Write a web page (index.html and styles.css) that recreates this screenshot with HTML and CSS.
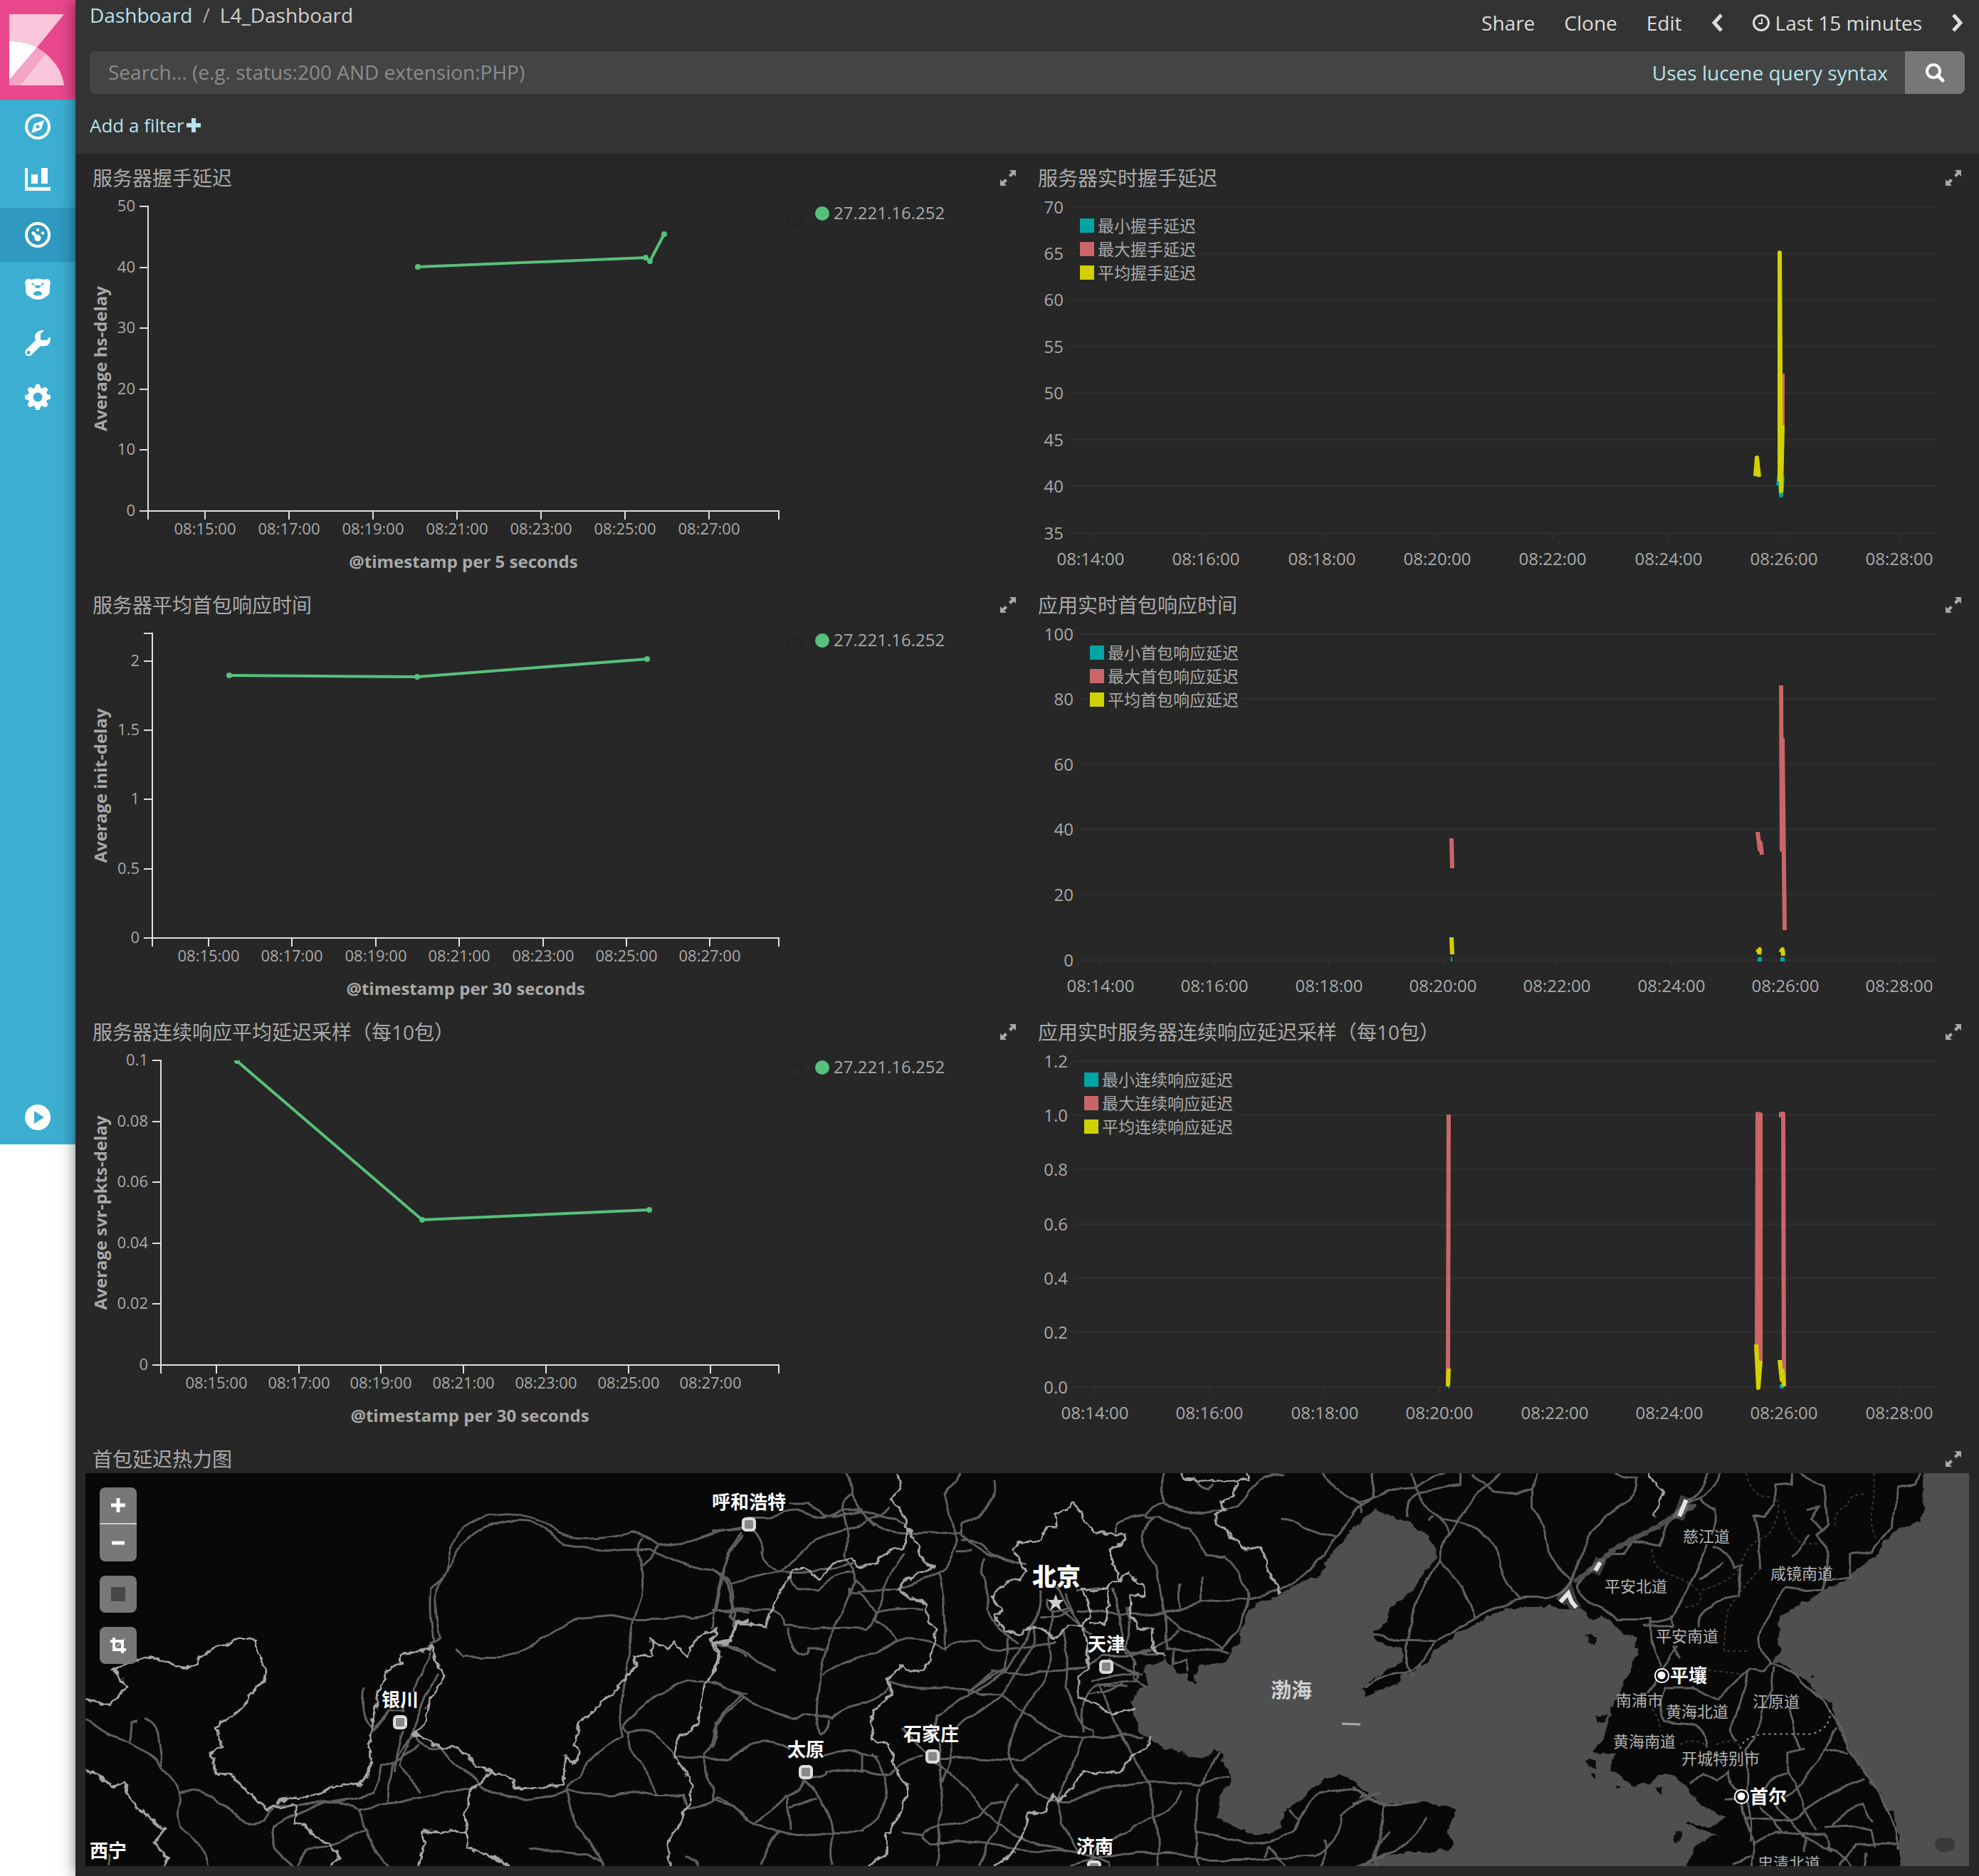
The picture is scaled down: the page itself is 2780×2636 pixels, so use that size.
FILE: index.html
```html
<!DOCTYPE html>
<html lang="zh-CN">
<head>
<meta charset="utf-8">
<title>L4_Dashboard</title>
<link rel="stylesheet" href="styles.css">
</head>
<body>
<div class="app">
  <nav class="sidebar" aria-label="Apps">
    <a class="logo" href="#" aria-label="Home">
      <svg viewBox="0 0 77 100" width="77" height="100">
        <path fill="#f9c6db" d="M0 0H77L39 46.500Q20 37 0 38Z"/>
        <path fill="#fff" d="M0 38Q20 37 39 46.500L0 92.500Z"/>
        <path fill="#f5a4c7" d="M39 46.500L51 55L15 100H0V92.500Z"/>
        <path fill="#f9c6db" d="M51 55Q74 75 77 100H15Z"/>
      </svg>
    </a>
    <a class="nav-item" href="#" aria-label="Discover">
      <svg viewBox="0 0 36 36"><circle cx="18" cy="18" r="16" fill="none" stroke="#fff" stroke-width="4"/><path fill="#fff" fill-rule="evenodd" d="M27 9L23 22L9 27L13 14ZM18 15.500a2.500 2.500 0 1 0 .1 0Z"/></svg>
    </a>
    <a class="nav-item" href="#" aria-label="Visualize">
      <svg viewBox="0 0 36 36"><path fill="#fff" d="M0 0H4V27H36V32H0ZM9 9H18V22H9ZM23 0H32V22H23Z"/></svg>
    </a>
    <a class="nav-item active" href="#" aria-label="Dashboard">
      <svg viewBox="0 0 36 36"><circle cx="18" cy="18" r="16" fill="none" stroke="#fff" stroke-width="4"/><g fill="#fff"><circle cx="18" cy="22.500" r="4.500"/><circle cx="18" cy="11" r="2.300"/><circle cx="25" cy="15.500" r="2.300"/></g><path d="M11.500 15.500L18 22" stroke="#fff" stroke-width="4.500" stroke-linecap="round"/></svg>
    </a>
    <a class="nav-item" href="#" aria-label="Timelion">
      <svg viewBox="0 0 36 36"><path fill="#fff" fill-rule="evenodd" d="M2 5Q5 3 9 5Q18 2 27 5Q31 3 34 5Q37 8 35 13V19Q35 27 29 29Q25 33 18 33Q11 33 7 29Q1 27 1 19V13Q-1 8 2 5ZM9 11L14 14L11 9ZM27 11L22 14L25 9ZM14 13H22Q22 17 18 17Q14 17 14 13ZM12 26Q12 21 18 21Q24 21 24 26Q18 29 12 26Z"/></svg>
    </a>
    <a class="nav-item" href="#" aria-label="Dev Tools">
      <svg viewBox="0 0 36 36"><path fill="#fff" fill-rule="evenodd" d="M27 0L22 5V13L24 14L31 14L35 9Q37 14 34 19Q30 24 22 22L9 35Q5 38 2 35Q-1 32 1 28L15 14Q12 7 17 3Q21-1 27 0ZM5 29a2.500 2.500 0 1 0 .1 0Z"/></svg>
    </a>
    <a class="nav-item" href="#" aria-label="Management">
      <svg viewBox="0 0 36 36"><g fill="#fff"><circle cx="18" cy="18" r="13.500"/><path id="tooth" d="M15.500 0H20.500L23 7V29L20.500 36H15.500L13 29V7Z"/><use href="#tooth" transform="rotate(45 18 18)"/><use href="#tooth" transform="rotate(90 18 18)"/><use href="#tooth" transform="rotate(135 18 18)"/></g><circle cx="18" cy="18" r="6.500" fill="#3caed2"/></svg>
    </a>
    <a class="nav-item collapse" href="#" aria-label="Expand">
      <svg viewBox="0 0 36 36"><circle cx="18" cy="18" r="18" fill="#fff"/><path fill="#3caed2" d="M13 9L27 18L13 27Z"/></svg>
    </a>
  </nav>

  <main class="main">
    <header class="header">
      <div class="topbar">
        <div class="crumbs"><a href="#">Dashboard</a><span class="slash">/</span><span>L4_Dashboard</span></div>
        <div class="menu">
          <button type="button">Share</button>
          <button type="button">Clone</button>
          <button type="button">Edit</button>
          <button type="button" aria-label="Previous"><svg width="17" height="26" viewBox="0 0 17 26"><path d="M14 2L4 13L14 24" fill="none" stroke="#ddd" stroke-width="5"/></svg></button>
          <button type="button" class="time"><svg width="24" height="24" viewBox="0 0 24 24"><circle cx="12" cy="12" r="10.500" fill="none" stroke="#ddd" stroke-width="3"/><path d="M13 6V13H8" fill="none" stroke="#ddd" stroke-width="2"/></svg>Last 15 minutes</button>
          <button type="button" aria-label="Next"><svg width="17" height="26" viewBox="0 0 17 26"><path d="M3 2L13 13L3 24" fill="none" stroke="#ddd" stroke-width="5"/></svg></button>
        </div>
      </div>
      <form class="search">
        <input type="text" aria-label="Search" placeholder="Search... (e.g. status:200 AND extension:PHP)">
        <a href="#">Uses lucene query syntax</a>
        <button type="button" aria-label="Submit search"><svg width="28" height="28" viewBox="0 0 28 28"><circle cx="12" cy="12" r="9" fill="none" stroke="#fff" stroke-width="4"/><path d="M18 18L25 25" stroke="#fff" stroke-width="5" stroke-linecap="round"/></svg></button>
      </form>
      <div class="filters"><a href="#">Add a filter <svg width="20" height="20" viewBox="0 0 20 20"><path d="M7 0H13V7H20V13H13V20H7V13H0V7H7Z" fill="#b7e2ea"/></svg></a></div>
    </header>

    <div class="grid">
      <section class="panel"><div class="panel-head"><h2>服务器握手延迟</h2><button type="button" class="expand" aria-label="Expand panel"></button></div><div class="chart" data-chart="hs"></div></section>
      <section class="panel"><div class="panel-head"><h2>服务器实时握手延迟</h2><button type="button" class="expand" aria-label="Expand panel"></button></div><div class="chart" data-chart="hsLive"></div></section>
      <section class="panel"><div class="panel-head"><h2>服务器平均首包响应时间</h2><button type="button" class="expand" aria-label="Expand panel"></button></div><div class="chart" data-chart="init"></div></section>
      <section class="panel"><div class="panel-head"><h2>应用实时首包响应时间</h2><button type="button" class="expand" aria-label="Expand panel"></button></div><div class="chart" data-chart="initLive"></div></section>
      <section class="panel"><div class="panel-head"><h2>服务器连续响应平均延迟采样（每10包）</h2><button type="button" class="expand" aria-label="Expand panel"></button></div><div class="chart" data-chart="pkts"></div></section>
      <section class="panel"><div class="panel-head"><h2>应用实时服务器连续响应延迟采样（每10包）</h2><button type="button" class="expand" aria-label="Expand panel"></button></div><div class="chart" data-chart="pktsLive"></div></section>

      <section class="panel wide">
        <div class="panel-head"><h2>首包延迟热力图</h2><button type="button" class="expand" aria-label="Expand panel"></button></div>
        <div class="map">
          <svg class="map-svg" viewBox="120 2070 2646 552">
            <defs>
              <filter id="rough" x="0" y="0" width="1" height="1" filterUnits="objectBoundingBox"><feTurbulence type="fractalNoise" baseFrequency="0.07" numOctaves="3" seed="4"/><feDisplacementMap in="SourceGraphic" scale="11" xChannelSelector="R" yChannelSelector="G"/></filter>
              <filter id="soft" x="0" y="0" width="1" height="1"><feTurbulence type="fractalNoise" baseFrequency="0.03" numOctaves="2" seed="9"/><feDisplacementMap in="SourceGraphic" scale="9" xChannelSelector="R" yChannelSelector="G"/></filter>
            </defs>
            <rect x="120" y="2070" width="2646" height="552" fill="#080808"/>

            <!-- sea -->
            <g filter="url(#rough)" fill="#4f4f4f">
              <rect x="100" y="2050" width="2690" height="592" fill="none"/>
              <path transform="translate(1000 2030) scale(.6059 .3865)" d="M1500 280L1480 315L1450 370L1420 430L1412 475L1380 490L1340 520L1320 542L1290 560L1265 575L1240 610L1225 670L1225 715L1200 770L1180 795L1130 800L1120 830L1122 865L1105 862L1100 830L1080 830L1065 800L1050 778L1010 800L1000 830L1012 870L985 900L975 940L980 990L990 1040L1020 1075L1050 1105L1080 1110L1110 1140L1160 1130L1162 1105L1180 1120L1185 1150L1195 1180L1205 1215L1185 1250L1175 1300L1172 1355L1200 1375L1240 1415L1300 1412L1320 1390L1325 1335L1370 1290L1392 1245L1420 1220L1460 1200L1500 1225Z"/>
              <path transform="translate(1900 2030) scale(.5612 .3865)" d="M-10 310L5 310L30 265L55 235L90 260L120 270L150 290L180 320L200 350L212 400L195 440L170 480L150 530L120 560L90 600L90 645L50 680L60 710L90 735L130 740L125 790L90 820L50 850L25 885L35 915L60 895L110 870L120 840L160 820L190 780L215 740L250 700L300 660L340 620L380 600L440 590L500 590L530 600L580 600L600 640L625 620L650 650L680 690L710 700L712 760L695 820L670 900L650 960L640 1010L625 1080L600 1110L620 1125L655 1120L645 1180L670 1210L700 1240L740 1230L770 1200L800 1205L835 1235L860 1290L900 1330L930 1360L900 1390L830 1370L870 1400L920 1425L890 1430L850 1470L830 1580L0 1580L0 1540L60 1510L120 1480L200 1480L240 1470L250 1445L240 1400L260 1325L185 1300L170 1295L80 1310L20 1250L-10 1215Z"/>
              <path transform="translate(1900 2030) scale(.5612 .3865)" d="M1435 60L1425 160L1430 230L1420 285L1370 300L1330 350L1320 390L1290 430L1250 460L1240 490L1190 520L1150 555L1110 590L1070 620L1065 680L1070 750L1050 790L1100 815L1140 870L1170 915L1200 945L1210 1010L1235 1090L1260 1150L1290 1215L1320 1270L1350 1340L1365 1420L1375 1580L1580 1580V60Z"/>
              <path transform="translate(1900 2030) scale(.5612 .3865)" fill="#080808" d="M585 695l25 5l-5 25l-20-5ZM610 985l25-5v20l-25 5ZM585 1150l25-3v30l-22-5ZM595 1190l15 5v20l-14-10ZM660 1235h8v12h-8ZM760 1240h10v28h-8ZM805 1400l20 10l-5 35l-14-10ZM1148 840h8v10h-8Z"/>
            </g>

            <!-- roads and rivers -->
            <g class="roads" filter="url(#soft)">
              <rect x="100" y="2050" width="2690" height="592" stroke="none"/>
              <g transform="translate(100 2030) scale(.6059 .3865)">
                <path d="M875 430Q880 350 905 310Q930 260 1010 250Q1080 255 1120 310Q1150 350 1220 340Q1270 335 1300 318Q1330 330 1360 365L1435 352Q1490 315 1560 300"/>
                <path d="M885 430Q900 350 960 300Q1010 265 1060 275Q1100 300 1140 365Q1190 375 1230 388Q1270 370 1340 380Q1400 430 1470 455Q1510 460 1530 510Q1540 560 1530 620L1545 650"/>
                <path d="M875 430Q870 480 835 520Q830 600 840 710M885 430Q850 500 845 560Q845 640 855 700L830 720"/>
                <path d="M890 740L908 772L1000 772Q1060 750 1090 705Q1140 660 1180 630L1255 620L1310 638H1380Q1410 620 1440 630Q1480 620 1500 600L1568 610"/>
                <path d="M1325 340Q1310 360 1315 400Q1330 470 1325 540Q1300 640 1298 720Q1285 830 1275 930Q1270 1000 1280 1060Q1200 1120 1180 1210Q1150 1230 1150 1260Q1160 1380 1200 1440L1235 1532M1360 365L1325 440M1552 320Q1520 400 1510 480L1495 600L1568 597"/>
                <path d="M830 720V780Q800 860 795 900M855 830Q820 910 805 980Q790 1050 760 1160M740 970Q730 1010 700 1040Q670 1000 680 885M790 1060Q770 1090 745 1160L735 1300M770 1040Q750 1120 750 1190M805 1090Q770 1140 720 1165Q715 1230 700 1265Q650 1295 590 1300Q510 1340 470 1390Q460 1450 470 1475L520 1532M760 1160L808 1265M700 1040L740 970H770V940"/>
                <path d="M33 1000Q80 1050 130 1080Q190 1120 210 1170Q250 1230 250 1290Q240 1350 250 1390Q300 1430 315 1532M135 1085Q140 1040 140 1010L155 1005M170 995Q200 1010 200 1060L210 1165M250 1262Q300 1240 340 1300Q370 1310 390 1360Q420 1390 445 1370L465 1320"/>
                <path d="M465 1320Q530 1300 620 1300Q650 1310 665 1325Q670 1370 685 1400Q700 1480 735 1532M665 1325Q720 1305 760 1300Q840 1270 940 1240M685 1400Q640 1430 600 1455Q540 1460 540 1490L525 1532"/>
                <path d="M795 1050Q810 1110 860 1110Q890 1180 940 1215Q960 1280 1050 1290Q1120 1280 1150 1255Q1200 1280 1260 1275Q1310 1255 1350 1275L1420 1272L1430 1320Q1480 1310 1500 1285Q1530 1300 1568 1365M1280 1030Q1330 920 1390 890Q1420 840 1480 860Q1520 900 1568 905M1280 1030L1295 1050Q1330 1020 1360 1060Q1400 1110 1400 1135L1520 1145L1568 1105M1295 1050Q1290 1130 1320 1155Q1350 1200 1355 1275M1560 920Q1500 990 1490 1040Q1490 1090 1470 1130Q1460 1200 1490 1250V1290M1060 1465L1130 1480L1200 1490L1230 1520M1425 1495Q1450 1500 1455 1532M1500 730Q1550 740 1568 770M87 1490V1532"/>
              </g>
              <g transform="translate(1000 2030) scale(.6059 .3865)">
                <path d="M0 315Q60 310 85 300Q110 320 120 380Q110 420 155 465Q200 420 240 345Q300 305 350 290Q390 260 410 230M85 265H130Q180 230 210 240Q230 270 260 268L300 240H350Q370 300 420 320Q500 330 580 315M180 215H225L260 260Q300 260 350 245Q400 255 450 290"/>
                <path d="M312 103Q330 150 325 180Q300 200 305 260Q320 340 310 400Q330 450 330 500Q320 560 290 650Q250 770 250 860Q240 960 245 1010L250 1060M325 180Q340 240 380 300M70 330Q30 420 20 500Q10 560 0 670M0 455Q40 480 45 560Q60 620 50 660M45 505Q100 480 150 465H240L330 430"/>
                <path d="M180 465Q190 520 205 525H245Q280 470 325 465M330 490Q360 520 350 530H440M320 520V540H340M0 600H130Q165 610 170 660Q200 660 240 672Q300 660 360 670Q380 640 380 610Q350 560 340 530M380 640Q400 650 430 710Q500 700 540 745Q560 715 620 715Q640 760 700 740L800 720M180 670Q180 740 200 765Q230 770 225 745H260M430 710Q380 760 330 780Q280 810 255 840M380 610Q430 590 490 600M20 735Q70 730 90 770Q120 810 150 825"/>
                <path d="M575 103Q550 160 540 180Q550 270 570 340Q560 440 525 470Q540 520 540 740M655 125Q660 180 650 200Q630 260 580 290V320Q610 380 640 400L700 430M580 340Q620 350 640 390Q660 410 730 435M570 385H600M630 410Q620 450 635 480Q640 560 635 600Q650 650 690 700L710 720M525 470L440 520M380 640Q400 470 450 390"/>
                <path d="M1050 103Q1040 160 1045 210Q1020 220 1010 250Q1000 270 1035 260Q1060 290 1110 300Q1130 350 1150 405H1190Q1220 450 1230 500Q1250 530 1245 560Q1240 620 1220 670L1185 740Q1140 690 1085 675L1050 620M1045 210Q1090 250 1140 250L1220 230Q1240 200 1260 150Q1280 110 1325 108M1005 255Q950 270 940 290L940 325M1030 260Q1000 300 995 330Q1000 390 1030 440Q1040 540 1050 620Q1050 700 1055 745H1180L1200 760M1415 103Q1430 150 1500 215Q1530 200 1568 175M1500 230Q1460 300 1440 350Q1400 440 1360 480Q1330 530 1250 560Q1190 570 1130 575Q1060 620 990 615Q940 620 850 600M1320 270Q1350 270 1370 300L1410 325L1445 330M1530 103L1535 200M1085 500V600M1133 480V575M1115 120Q1130 160 1150 165L1162 140"/>
                <path d="M760 530Q770 600 740 660Q710 760 680 830Q640 880 590 910Q540 970 520 980L510 1050M745 660V720Q710 820 670 910L580 1010L560 1040M790 600Q780 700 785 760Q780 860 750 910L720 970Q690 1060 690 1120Q700 1210 770 1280L800 1300L810 1370L850 1480M815 680Q830 780 820 880Q840 960 860 1020L885 1040V1070M410 860Q460 890 520 885Q580 880 620 905H670Q700 960 740 990Q780 1040 815 1062H850Q900 1070 950 1055L1000 1062M650 825Q720 840 760 820L870 810M690 700L680 820L590 900Q610 880 660 825"/>
                <path d="M800 520Q830 600 860 660L880 690M820 540L840 610M845 530L910 520M780 560Q770 590 790 610L830 590M800 590L870 670M760 630H800L830 600M930 520L940 590Q950 700 960 760L1050 760M870 810L900 770H970L1020 745M880 860Q940 830 1000 830M860 1040Q850 900 900 870L960 880M940 800L990 840L980 860L900 870Q920 960 950 1060Q970 1120 990 1170Q1020 1240 1025 1350L1035 1400V1532M980 780L975 850L1010 880M920 780Q950 820 990 825M870 910Q920 900 950 870M960 590Q970 700 960 740L985 800M1070 750V800L1100 780L1105 830M1085 680L1060 710L1020 740"/>
                <path d="M0 860Q40 900 70 910Q110 960 190 1000L210 980L280 995Q310 950 350 940Q400 920 410 870M70 910Q30 960 10 1010Q10 1080 0 1100M0 1140L40 1145Q60 1110 120 1080Q160 1080 180 1110M270 1000Q270 1040 250 1060M260 1130Q300 1110 350 1120L385 1135M345 1120V1180Q380 1210 410 1200L440 1160L490 1130M220 1215Q270 1210 265 1190Q300 1170 350 1190M215 1210Q210 1260 170 1280Q150 1320 100 1370M215 1220L250 1280Q280 1360 280 1400V1420Q270 1490 280 1532M0 1290Q50 1310 70 1340Q100 1390 160 1405Q200 1430 240 1410H350Q400 1330 405 1280Q400 1180 370 1120M175 1280L180 1400M180 1320L245 1285M160 1405Q130 1440 120 1500L110 1532"/>
                <path d="M440 1030Q480 1110 520 1140H560Q620 1140 720 1150Q770 1080 815 1062M510 1150Q570 1210 590 1250Q640 1350 690 1410Q740 1450 800 1470L860 1485M525 1080Q530 1200 535 1250Q525 1400 520 1532M555 1080V1150L535 1230M710 1230Q680 1300 670 1370Q640 1450 620 1532M680 1305L650 1300L620 1350Q580 1380 540 1380Q480 1400 490 1430L505 1450H540Q600 1440 650 1455Q720 1480 840 1480M440 1410L490 1420M860 1060Q830 1190 800 1290M800 1300H830Q880 1250 950 1240Q1000 1220 1090 1230L1130 1240Q1150 1180 1175 1120M1130 1240Q1140 1220 1200 1210M1130 1250Q1120 1350 1125 1400Q1180 1430 1240 1450Q1300 1460 1350 1400Q1380 1300 1410 1265Q1450 1245 1500 1260L1520 1290L1568 1310M1090 1260Q1080 1320 1030 1360Q980 1370 970 1400L900 1450L870 1532M830 1532Q900 1500 990 1480L1080 1485L1160 1510H1250Q1330 1500 1400 1495Q1460 1440 1460 1340Q1490 1300 1550 1270M1125 1400Q1120 1480 1130 1532M1290 1460L1280 1500M1290 1460L1330 1532M1420 1440Q1430 1490 1410 1532M1568 1400Q1530 1470 1540 1532M1340 1330L1360 1360M1510 1530L1568 1480M860 1490L920 1520V1532"/>
              </g>
              <g transform="translate(1900 2030) scale(.5612 .3865)">
                <path d="M48 103L52 200M0 195L22 220V250M0 250Q60 180 120 155L160 150Q200 110 230 103M143 103Q160 200 210 250Q230 280 240 325Q220 370 215 420Q170 520 150 620Q130 720 135 800L150 840M270 103V140Q220 170 160 175Q130 200 140 260M370 103Q320 170 300 200Q270 260 240 330M300 103Q340 150 350 170L410 180L450 160L460 103M450 160V230Q480 270 490 390Q510 440 548 490M215 420Q250 480 275 520Q300 580 308 630M220 270Q290 280 330 330Q370 380 370 440Q380 500 420 560M190 275L205 255M655 103Q680 125 710 125Q710 190 680 210Q610 290 590 340Q560 430 548 490Q530 550 490 555H430Q350 590 300 640Q240 680 210 720Q170 820 120 830Q60 840 30 885M50 690H80Q110 720 140 712L210 716M185 1355Q150 1440 130 1460L70 1490L20 1532M80 1310Q70 1430 50 1505M0 1250Q30 1265 20 1285L60 1270M0 1305L40 1290Q90 1320 160 1300"/>
                <path d="M915 103Q920 140 880 180Q830 210 800 260Q780 290 770 370L700 350L680 400L640 400L600 450L560 510Q560 560 600 580Q650 610 660 635H750Q750 700 755 750L775 810M890 103Q870 180 840 200M870 190Q880 230 910 235Q915 290 900 330M885 360Q870 400 865 460Q830 550 800 630L750 650M800 660V620M900 370Q950 390 955 450L975 440M970 440Q970 500 965 555Q910 560 900 590Q860 610 865 660M925 425Q910 460 870 490M730 660H800M810 730L775 830L740 900M800 730L820 780M1100 103V145L1060 150Q1060 220 1030 260H1005Q1020 330 1020 400L1022 450M1120 103Q1150 130 1180 150Q1190 250 1190 290L1165 325Q1190 370 1190 420L1180 525L1130 530L1085 520Q1050 580 1040 620Q1000 700 1030 770L1045 800Q1100 810 1120 860Q1150 900 1185 945Q1220 1010 1240 1110Q1290 1200 1330 1300Q1360 1370 1365 1470M1140 240L1170 230L1150 270L1180 310M1145 330Q1120 370 1100 410M1420 103L1410 145L1370 155Q1350 240 1350 300Q1320 350 1300 390L1245 400V480L1200 490"/>
                <path d="M1045 800L1030 825L1000 815Q930 890 920 925Q880 900 850 885L785 885Q760 960 780 1005L850 1015Q890 1060 890 1100M1055 810Q1050 900 1025 970Q1020 1050 985 1110Q990 1200 985 1260M995 820Q980 900 960 980Q930 1040 960 1080M1090 965Q1110 1020 1105 1060L1120 1105M1210 1030Q1180 1110 1150 1170Q1120 1260 1080 1280M1180 1105L1240 1125M1280 1215Q1200 1260 1140 1320Q1110 1370 1090 1370L980 1360M845 1230L880 1195L910 1220L940 1185Q940 1240 970 1270Q970 1350 1000 1420Q1010 1480 1000 1532M985 1290Q1000 1380 995 1440M1090 1180Q1120 1260 1130 1320L1160 1400M1060 1310Q1080 1360 1100 1370L1130 1430V1480M1000 1450L1060 1405L1130 1415H1180Q1200 1450 1190 1465Q1240 1490 1250 1532M1020 1315Q1050 1370 1075 1405M1180 1390L1240 1385L1300 1405L1310 1465M1365 1455H1260L1220 1530M1280 1532L1285 1480M930 1290L980 1285M1030 1270Q1040 1210 1090 1190V1120L1130 1105M1200 1390L1240 1330L1275 1310L1300 1370M950 1525L1000 1500M1120 1420L1150 1440L1200 1480"/>
              </g>
            </g>

            <!-- the Yalu river -->
            <path class="river" filter="url(#rough)" transform="translate(1900 2030) scale(.5612 .3865)" d="M555 500L610 440L650 385L700 345L760 300L800 265L860 215"/>

            <!-- province borders -->
            <g class="borders" filter="url(#rough)">
              <rect x="100" y="2050" width="2690" height="592" stroke="none"/>
              <g transform="translate(100 2030) scale(.6059 .3865)">
                <path d="M33 920L65 945L90 948L130 878L95 815L185 770L270 815L320 745L390 707L430 710V750L452 820L445 865L430 880L400 950L335 1025L350 1100L327 1120L332 1185L375 1210L450 1322L520 1315L525 1340L515 1380L540 1385L580 1440L600 1450L620 1500L605 1532M33 1185L60 1200L95 1245L120 1225L140 1300L215 1400L190 1450L225 1500L212 1532"/>
                <path d="M480 1310L485 1292L560 1275L620 1235H665L690 1200L695 1140L690 1090L700 1000L710 900L740 800H765V760H800L835 730L850 810L866 840L830 930L820 1010L795 1050L860 1105L895 1100L940 1165L1025 1215L1030 1250L1140 1240L1145 1130L1165 1165L1180 1120L1165 1085L1180 1010L1215 960L1265 890L1310 800L1305 765L1350 770L1345 707L1380 740L1400 725L1425 765L1450 700L1495 668L1485 715L1505 750L1490 830L1475 850L1450 1020L1410 1060L1398 1130L1440 1230L1435 1310L1418 1340V1375L1385 1440V1532M970 1185L960 1215L925 1260L912 1350L918 1410L830 1405L815 1400L818 1450L805 1532M918 1410L920 1465L980 1500L1012 1532M1490 730L1530 718L1545 645H1568"/>
              </g>
              <g transform="translate(1000 2030) scale(.6059 .3865)">
                <path d="M428 103L438 155L415 200L445 260L450 300L480 370L490 430L515 440L500 460L450 485L430 535L500 580V650L520 670L505 780L490 820L455 830L442 805L405 850L415 905L375 970L370 1070L410 1095L440 1230L458 1240L430 1360L405 1410V1485L360 1532M0 835L20 770L0 725L40 715L55 650L125 660L150 560L185 460L210 450L250 490L280 430L320 415L340 440H370L410 385L445 380L455 310M0 715L10 660"/>
                <path d="M838 210L885 320L960 330L960 350L925 380L925 430L945 490L965 465L1005 520L1005 548L970 545V620L985 665L1025 670L1020 735L1048 775M838 210L830 235L795 250L800 300L775 300L760 345L710 360L700 385L730 460L715 490L680 505L650 550L668 600L655 620L665 660L710 690L735 665L770 670L795 710L825 660L860 655L880 620L860 530L910 520L950 490M915 515L920 580L912 650L880 645M860 660L870 740L875 810L850 840L850 920L895 940L905 965L930 980L985 960M1020 1055L1005 1110L975 1130L950 1190L860 1192L805 1300L790 1270L775 1330L735 1340L715 1440L690 1500L655 1532M1090 103L1095 125L1170 130L1240 125V103M1220 130L1210 190L1180 210L1190 235L1170 250V290L1235 375H1275L1285 460L1305 490L1318 540"/>
              </g>
              <path transform="translate(1900 2030) scale(.5612 .3865)" d="M742 103L760 145L780 180L765 235L750 262"/>
            </g>
            <g transform="translate(1900 2030) scale(.5612 .3865)">
              <path class="province" d="M985 103Q1000 190 1040 190L1060 190Q1080 240 1040 330Q990 350 970 440Q950 500 870 530M750 380Q750 450 790 470Q850 500 870 540Q880 590 830 590M1305 103V200Q1290 280 1310 340M1280 180Q1240 180 1240 220Q1200 240 1210 300M1080 240Q1090 340 1130 360L1170 360M1020 450Q970 530 940 600Q930 680 930 750L990 750M890 820L960 830L980 840M750 960Q770 1000 770 1040M820 1090Q860 1060 890 1100M910 1090Q960 1060 970 1100"/>
              <path class="dmz" d="M970 1105Q980 1060 1030 1052L1150 1052Q1200 1030 1195 960"/>
              <path class="halo" d="M835 190L815 270M622 415L606 468M520 572L540 535L548 570L560 600"/>
              <path class="glow" d="M835 200L818 260M620 428L608 458M520 572L540 540L548 570L560 592"/>
            </g>
            <path d="M1885 2422L1911 2423" stroke="#aaa" stroke-width="3"/>
            <path transform="translate(1483 2252)" fill="#ccc" d="M0-12L3-4H11L5 2L8 11L0 5L-8 11L-5 2L-11-4H-3Z"/>
            <g class="towns"><rect x="1044" y="2134" width="16" height="16" rx="4"/><rect x="1124" y="2482" width="16" height="16" rx="4"/><rect x="1302" y="2460" width="16" height="16" rx="4"/><rect x="1546" y="2334" width="16" height="16" rx="4"/><rect x="554" y="2412" width="16" height="16" rx="4"/><rect x="1529" y="2616" width="16" height="16" rx="4"/></g>
            <g class="capitals"><circle cx="2334" cy="2354" r="7"/><circle cx="2446" cy="2524" r="7"/></g>
            <g class="city">
              <text x="1052" y="2120">呼和浩特</text><text x="1554" y="2320">天津</text><text x="1308" y="2446">石家庄</text><text x="1132" y="2468">太原</text><text x="1538" y="2604">济南</text><text x="562" y="2398">银川</text><text x="152" y="2610">西宁</text><text x="2372" y="2364">平壤</text><text x="2484" y="2534">首尔</text>
            </g>
            <text class="city big" x="1484" y="2228">北京</text>
            <text class="seaname" x="1814" y="2386">渤海</text>
            <g class="region">
              <text x="2397" y="2167">慈江道</text><text x="2298" y="2237">平安北道</text><text x="2531" y="2219">咸镜南道</text><text x="2370" y="2307">平安南道</text><text x="2303" y="2397">南浦市</text><text x="2384" y="2413">黄海北道</text><text x="2495" y="2399">江原道</text><text x="2310" y="2455">黄海南道</text><text x="2417" y="2479">开城特别市</text><text x="2513" y="2626">忠清北道</text>
            </g>
            <rect x="2718" y="2582" width="28" height="20" rx="10" fill="#3a3a3a"/>
          </svg>
          <div class="map-tools">
            <div class="zoom">
              <button type="button" aria-label="Zoom in"><svg width="22" height="22" viewBox="0 0 22 22"><path d="M11 1V21M1 11H21" stroke="#fff" stroke-width="5"/></svg></button>
              <button type="button" aria-label="Zoom out"><svg width="22" height="22" viewBox="0 0 22 22"><path d="M2 11H20" stroke="#fff" stroke-width="5"/></svg></button>
            </div>
            <button type="button" aria-label="Draw rectangle"><svg width="22" height="22" viewBox="0 0 22 22"><rect x="1" y="1" width="20" height="20" fill="#484848"/></svg></button>
            <button type="button" aria-label="Fit data bounds"><svg width="24" height="24" viewBox="0 0 24 24"><path d="M1 6H18V23M6 1V18H23" fill="none" stroke="#fff" stroke-width="4"/><path d="M6 18L22 2" stroke="#fff" stroke-width="1"/></svg></button>
          </div>
        </div>
      </section>
    </div>
  </main>
</div>
<script src="charts.js"></script>
</body>
</html>
```
FILE: styles.css
```css
* { box-sizing: border-box; }
body { margin: 0; background: #fff; color: #a9a9a9; font: 28px/40px "Open Sans", "Noto Sans CJK SC", sans-serif; }
a { color: #b7e2ea; text-decoration: none; }
button { font: inherit; color: inherit; background: none; border: 0; padding: 0; }
svg { display: block; }

.app { display: flex; align-items: stretch; min-height: 100vh; }

.sidebar { flex: 0 0 106px; height: 61vh; min-height: 760px; background: #3caed2; display: flex; flex-direction: column; }
.logo { height: 140px; background: #e8478b; padding: 20px 13px; }
.nav-item { height: 76px; display: flex; align-items: center; justify-content: center; }
.nav-item.active { background: #2f99c1; }
.nav-item svg { width: 36px; height: 36px; }
.collapse { margin-top: auto; }

.main { flex: 1; min-width: 0; position: relative; background: #272727; box-shadow: 0 0 20px rgba(0, 0, 0, .5); }

.header { background: #333; padding: 0 20px; height: 216px; }
.topbar { display: flex; justify-content: space-between; align-items: flex-start; height: 72px; }
.crumbs { line-height: 42px; color: #d0d0d0; }
.slash { color: #a9a9a9; padding: 0 14px; }
.menu { display: flex; align-items: center; gap: 41px; height: 64px; padding-right: 2px; color: #ddd; }
.time { display: flex; align-items: center; gap: 8px; }

.search { display: flex; align-items: center; height: 60px; background: #444; border-radius: 8px; overflow: hidden; }
.search input { flex: 1; height: 60px; border: 0; background: none; font: inherit; color: #ddd; padding: 0 26px 2px; outline: 0; }
.search input::placeholder { color: #8c8c8c; opacity: 1; }
.search a { padding-right: 24px; }
.search button { width: 84px; height: 60px; background: #777; display: flex; align-items: center; justify-content: center; }

.filters { font-size: 26px; padding-top: 24px; }
.filters a { display: inline-flex; align-items: center; gap: 3px; }

.grid { display: grid; grid-template-columns: 1fr 1fr; gap: 10px; padding: 14px; }
.panel { min-width: 0; }
.wide { grid-column: 1 / -1; }
.panel-head { display: flex; align-items: center; justify-content: space-between; height: 40px; padding: 0 11px 0 10px; }
.panel-head h2 { margin: 0; font-size: 28px; font-weight: 400; line-height: 40px; white-space: nowrap; }
.expand { width: 22px; height: 22px; }
.chart svg, .map-svg { width: 100%; height: auto; }

.chart text { fill: #a9a9a9; font-size: 24px; }
.chart .tick { font-size: 22px; }
.chart .axis-title { font-weight: 700; text-anchor: middle; }
.chart .mid { text-anchor: middle; }
.chart .end { text-anchor: end; }
.chart .key { font-size: 23px; }
.axis { fill: none; stroke: #e0e0e0; stroke-width: 2; }
.gridline { fill: none; stroke: #303030; stroke-width: 2; }
.line { fill: none; stroke: #57c17b; stroke-width: 4; }
.dot { fill: #57c17b; }
.series { fill: none; stroke-width: 6; stroke-linejoin: round; }

.map { position: relative; background: #080808; overflow: hidden; }
.map path { vector-effect: non-scaling-stroke; }
.roads { fill: none; stroke: #5e5e5e; stroke-width: 3; }
.river { fill: none; stroke: #4f4f4f; stroke-width: 7; }
.borders { fill: none; stroke: #a6a6a6; stroke-width: 3; }
.province { fill: none; stroke: #383838; stroke-width: 2; stroke-dasharray: 4 4; }
.dmz { fill: none; stroke: #999; stroke-width: 2; stroke-dasharray: 3 5; }
.halo { fill: none; stroke: #777; stroke-width: 16; opacity: .5; }
.glow { fill: none; stroke: #e4e4e4; stroke-width: 6; }
.towns rect { fill: #888; stroke: #ddd; stroke-width: 4; }
.capitals circle { fill: #fff; stroke: #080808; stroke-width: 3; outline: 2px solid #fff; outline-offset: 0; border-radius: 8px; }
.map text { text-anchor: middle; font-family: "Noto Sans CJK SC", sans-serif; }
.city { fill: #fff; font-size: 26px; font-weight: 700; }
.city.big { font-size: 34px; font-weight: 900; }
.seaname { fill: #d0d0d0; font-size: 29px; font-weight: 700; }
.region { fill: #b4b4b4; font-size: 22px; }

.map-tools { position: absolute; left: 20px; top: 20px; display: flex; flex-direction: column; gap: 20px; }
.map-tools button { width: 52px; height: 52px; background: #777; border-radius: 8px; display: flex; align-items: center; justify-content: center; }
.map-tools .zoom button:first-child { border-radius: 8px 8px 0 0; border-bottom: 2px solid #ccc; }
.map-tools .zoom button:last-child { border-radius: 0 0 8px 8px; }
```
FILE: charts.js
```js
const GREEN_LABEL = "27.221.16.252";
const COLORS = { min: "#00a5a5", max: "#cb6567", avg: "#d1d100" };

// Line charts: axis = x of the y axis, ticks = [label, y], xs = first tick and spacing.
const lineCharts = {
  hs: { axis: 88, yTitle: "Average hs-delay", xTitle: "@timestamp per 5 seconds",
    ticks: [["50", 20], ["40", 106], ["30", 191], ["20", 277], ["10", 362], ["0", 448]],
    xs: [168, 118], points: [[467, 105], [787, 92], [793, 97], [813, 59]] },
  init: { axis: 94, yTitle: "Average init-delay", xTitle: "@timestamp per 30 seconds",
    ticks: [["", 20], ["2", 59], ["1.5", 156], ["1", 253], ["0.5", 351], ["0", 448]],
    xs: [173, 117.4], points: [[202, 79], [466, 81], [789, 56]] },
  pkts: { axis: 106, yTitle: "Average svr-pkts-delay", xTitle: "@timestamp per 30 seconds",
    ticks: [["0.1", 20], ["0.08", 106], ["0.06", 191], ["0.04", 277], ["0.02", 362], ["0", 448]],
    xs: [184, 115.7], points: [[213, 21], [473, 244], [792, 230]] }
};

// Live charts: left = start of the grid, xs = first tick and spacing.
const liveCharts = {
  hsLive: { left: 55, labels: ["70", "65", "60", "55", "50", "45", "40", "35"], xs: [84, 162.3],
    keys: ["最小握手延迟", "最大握手延迟", "平均握手延迟"],
    series: [["min", "1050,412 1052,395 1054,426 1056,400"], ["max", "1056,255 1056,330"],
      ["avg", "1018,399 1020,373 1023,400"], ["avg", "1052,406 1052,85 1054,420 1056,328"]] },
  initLive: { left: 69, labels: ["100", "80", "60", "40", "20", "0"], xs: [98, 160.3],
    keys: ["最小首包响应延迟", "最大首包响应延迟", "平均首包响应延迟"],
    series: [["min", "591,475 591,481", 2], ["min", "1024,475 1024,481"], ["min", "1056,475 1056,481"],
      ["max", "591,308 592,350"], ["max", "1021,299 1024,324 1025,314 1027,331"],
      ["max", "1054,93 1055,324 1056,169 1059,437"],
      ["avg", "591,447 592,471"], ["avg", "1020,468 1024,464 1023,471"], ["avg", "1053,468 1056,464 1057,473"]] },
  pktsLive: { left: 61, labels: ["1.2", "1.0", "0.8", "0.6", "0.4", "0.2", "0.0"], xs: [90, 161.4],
    keys: ["最小连续响应延迟", "最大连续响应延迟", "平均连续响应延迟"],
    series: [["min", "587,475 587,481", 2], ["min", "1055,475 1055,481"],
      ["max", "587,96 586,478"], ["max", "1020,419 1021,95 1022,478 1025,96 1025,442"],
      ["max", "1054,100 1054,95 1057,95 1058,478"],
      ["avg", "586,478 587,453"], ["avg", "1019,419 1022,480 1025,442"],
      ["avg", "1052,441 1055,469 1056,456 1058,478"]] }
};

const pad = n => String(n).padStart(2, "0");
const svg = body => `<svg viewBox="0 0 1318 550">${body}</svg>`;

function lineChart(id, c) {
  let s = `<path class="axis" d="M${c.axis - 12} 20H${c.axis}V460M${c.axis - 12} 448H974V460`;
  c.ticks.forEach(t => { s += `M${c.axis - 12} ${t[1]}H${c.axis}`; });
  for (let i = 0; i < 7; i++) s += `M${Math.round(c.xs[0] + i * c.xs[1])} 448V460`;
  s += `"/>`;
  c.ticks.forEach(t => { s += `<text class="tick end" x="${c.axis - 18}" y="${t[1] + 7}">${t[0]}</text>`; });
  for (let i = 0; i < 7; i++) {
    s += `<text class="tick mid" x="${Math.round(c.xs[0] + i * c.xs[1])}" y="481">08:${15 + 2 * i}:00</text>`;
  }
  s += `<text class="axis-title" x="${(c.axis + 974) / 2}" y="528">${c.xTitle}</text>`;
  s += `<text class="axis-title" transform="translate(30 234) rotate(-90)">${c.yTitle}</text>`;
  s += `<clipPath id="clip-${id}"><rect x="${c.axis}" y="20" width="900" height="430"/></clipPath><g clip-path="url(#clip-${id})">`;
  s += `<polyline class="line" points="${c.points.join(" ")}"/>`;
  c.points.forEach(p => { s += `<circle class="dot" cx="${p[0]}" cy="${p[1]}" r="4"/>`; });
  s += `</g><circle cx="997" cy="36" r="10" fill="none" stroke="#242424" stroke-width="4"/>`;
  s += `<circle class="dot" cx="1035" cy="30" r="10"/><text x="1051" y="38">${GREEN_LABEL}</text>`;
  return svg(s);
}

function liveChart(c) {
  const step = 458 / (c.labels.length - 1);
  let s = "";
  c.labels.forEach((label, i) => {
    const y = Math.floor(21 + i * step);
    s += `<path class="gridline" d="M${c.left} ${y}H1272"/><text class="end" x="${c.left - 9}" y="${y + 9}">${label}</text>`;
  });
  for (let i = 0; i < 8; i++) {
    const x = Math.round(c.xs[0] + i * c.xs[1]);
    s += `<path class="gridline" d="M${x} 479V488"/><text class="mid" x="${x}" y="524">08:${pad(14 + 2 * i)}:00</text>`;
  }
  c.series.forEach(([kind, points, width]) => {
    s += `<polyline class="series" points="${points}" stroke="${COLORS[kind]}"${width ? ` style="stroke-width:${width}"` : ""}/>`;
  });
  s += `<rect x="${c.left + 10}" y="34" width="${34 + c.keys[0].length * 23}" height="96" fill="#272727"/>`;
  ["min", "max", "avg"].forEach((kind, i) => {
    const y = 37 + i * 33;
    s += `<rect x="${c.left + 14}" y="${y}" width="20" height="20" fill="${COLORS[kind]}"/>`;
    s += `<text class="key" x="${c.left + 39}" y="${y + 19}">${c.keys[i]}</text>`;
  });
  return svg(s);
}

document.querySelectorAll("[data-chart]").forEach(el => {
  const id = el.dataset.chart;
  el.innerHTML = lineCharts[id] ? lineChart(id, lineCharts[id]) : liveChart(liveCharts[id]);
});

document.querySelectorAll(".expand").forEach(el => {
  el.innerHTML = `<svg width="22" height="22" viewBox="0 0 22 22"><path fill="#a9a9a9" d="M13 0H22V9L19 6L15 10L12 7L16 3ZM0 13L3 16L7 12L10 15L6 19L9 22H0Z"/></svg>`;
});
```
